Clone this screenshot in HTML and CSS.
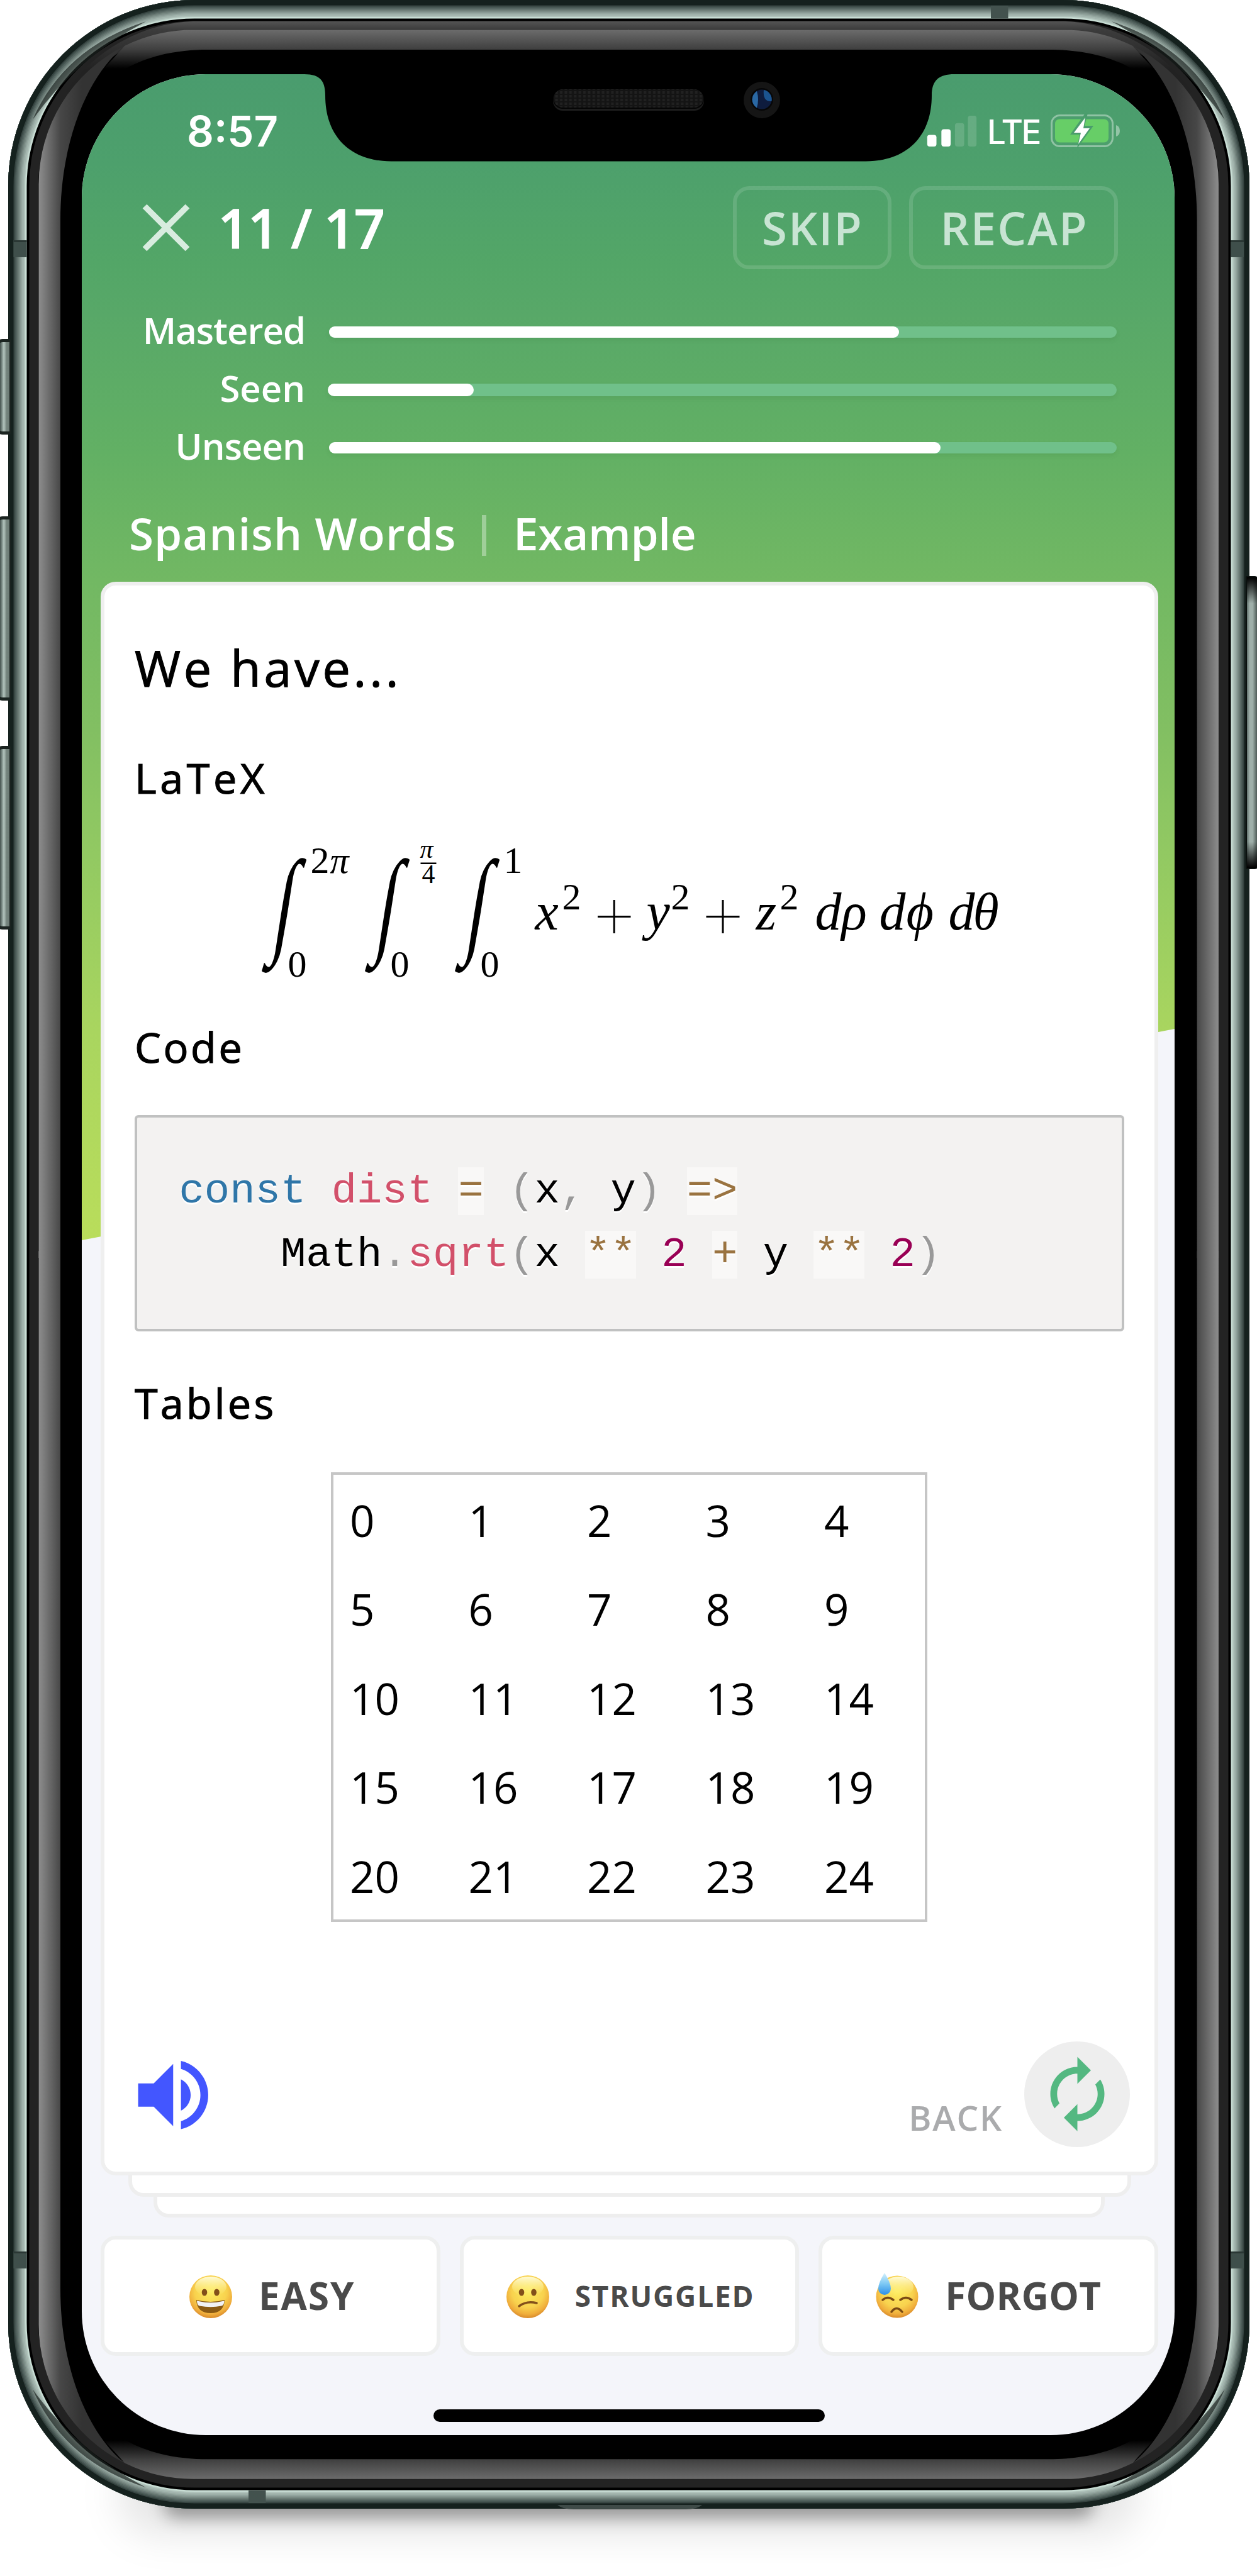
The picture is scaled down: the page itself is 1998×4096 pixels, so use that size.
FILE: index.html
```html
<!DOCTYPE html>
<html lang="en">
<head>
<meta charset="utf-8">
<title>Flashcards</title>
<link rel="stylesheet" href="styles.css">
</head>
<body>
<div class="stage">
  <div class="ground ground-wide"></div>
  <div class="ground ground-near"></div>
  <div class="body"></div>
  <div class="key key-mute"></div>
  <div class="key key-up"></div>
  <div class="key key-down"></div>
  <div class="key key-power"></div>
  <svg class="glass" viewBox="0 0 1998 4096">
    <defs>
      <linearGradient id="side" gradientUnits="userSpaceOnUse" x1="62" y1="0" x2="130" y2="0">
        <stop offset="0" stop-color="#8c8c8c"/><stop offset=".5" stop-color="#474747"/><stop offset="1" stop-color="#333"/>
      </linearGradient>
      <linearGradient id="cap" gradientUnits="userSpaceOnUse" x1="0" y1="47" x2="0" y2="109">
        <stop offset="0" stop-color="#6c6c6c"/><stop offset=".5" stop-color="#404040"/><stop offset="1" stop-color="#000"/>
      </linearGradient>
      <linearGradient id="lip" gradientUnits="userSpaceOnUse" x1="0" y1="33" x2="0" y2="110">
        <stop offset="0" stop-color="#565656"/><stop offset=".18" stop-color="#3c3c3c"/><stop offset="1" stop-color="#222"/>
      </linearGradient>
      <path id="crescent" fill="url(#side)" d="M61.500 2000V294A246 246 0 0 1 198 73C145 115 96 215 96 350V2000Z"/>
      <path id="ledge" fill="url(#cap)" d="M198 73A246 246 0 0 1 307 47.500H1000V79H330C290 79 240 86 200 109H165Q185 88 198 73Z"/>
      <path id="streak" fill="#1c2321" opacity=".7" d="M52 190Q102 76 232 34Q122 92 52 190Z"/>
      <g id="antenna"><rect x="21.500" y="0" width="21" height="27" fill="#3f4f4b"/><rect x="21.500" width="21" height="3" fill="#2a3734"/></g>
    </defs>
    <path fill="none" stroke="url(#lip)" stroke-width="13.500" d="M110 150A254 254 0 0 1 307 40.500H1692A254 254 0 0 1 1889 150"/>
    <g id="half"><use href="#crescent"/><use href="#ledge"/><use href="#streak"/></g>
    <use href="#half" transform="translate(1998.600 0) scale(-1 1)"/>
    <use href="#half" transform="translate(0 3989.300) scale(1 -1)"/>
    <use href="#half" transform="translate(1998.600 3989.300) scale(-1 -1)"/>
    <use href="#antenna" y="382"/><use href="#antenna" y="3580"/>
    <use href="#antenna" x="1934.500" y="382"/><use href="#antenna" x="1934.500" y="3580"/>
    <rect x="1575" y="9" width="27.500" height="20.500" fill="#43524e"/>
    <rect x="395" y="3960" width="27.500" height="20" fill="#43524e"/>
    <path d="M886 3983H1116Q1108 3990 1090 3990H912Q894 3990 886 3983Z" fill="#3f4b48"/>
  </svg>

  <main class="screen">
    <div class="hero"></div>

    <div class="status">
      <span class="clock">8:57</span>
      <div class="status-right">
        <svg class="signal" viewBox="0 0 80 50" fill="#fff">
          <rect x="0" y="31" width="15" height="19" rx="4"/><rect x="23" y="22" width="15" height="28" rx="4"/>
          <g opacity=".15"><rect x="45" y="12" width="15" height="38" rx="4"/><rect x="66" y="0" width="14" height="50" rx="4"/></g>
        </svg>
        <span class="lte">LTE</span>
        <svg class="battery" viewBox="0 0 110 52">
          <rect x="1.500" y="1.500" width="97" height="49" rx="13" fill="none" stroke="#fff" stroke-opacity=".38" stroke-width="3"/>
          <rect x="7" y="7.500" width="85" height="37" rx="7" fill="#67ce67"/>
          <path d="M104 17Q110 19 110 26T104 35Z" fill="#fff" fill-opacity=".4"/>
          <path d="M55 -2L31 32H46L42 54L68 18H54L59 -2Z" fill="#4a9d6c"/>
          <path d="M55 5L37 29H48L44 47L62 22H52Z" fill="#fff"/>
        </svg>
      </div>
    </div>

    <header class="topbar">
      <svg class="close" viewBox="0 0 76 76"><path d="M4 4L72 72M72 4L4 72" stroke="#d8ecdf" stroke-width="9.500"/></svg>
      <span class="count">11 / 17</span>
      <button class="ghost ghost-skip"><span>SKIP</span></button>
      <button class="ghost ghost-recap"><span>RECAP</span></button>
    </header>

    <section class="levels">
      <div class="level"><span class="level-name l1">Mastered</span><div class="track"><div class="fill" style="width:72.400%"></div></div></div>
      <div class="level"><span class="level-name l2">Seen</span><div class="track track-seen"><div class="fill" style="width:18.500%"></div></div></div>
      <div class="level"><span class="level-name l3">Unseen</span><div class="track"><div class="fill" style="width:77.700%"></div></div></div>
    </section>

    <div class="crumbs"><span class="crumb1">Spanish Words</span><i class="bar"></i><span class="crumb2">Example</span></div>

    <article class="card">
      <h1 class="lead">We have...</h1>
      <h2 class="sub s1">LaTeX</h2>
      <svg class="formula" viewBox="213.500 1281 1573 338">
        <g class="int">
          <text transform="translate(429 1497) skewX(-9) scale(.76 1.240)">∫</text>
          <text transform="translate(593 1497) skewX(-9) scale(.76 1.240)">∫</text>
          <text transform="translate(736 1497) skewX(-9) scale(.76 1.240)">∫</text>
        </g>
        <g class="small">
          <text x="493" y="1387.500">2</text><text class="it" x="524" y="1387.500">π</text>
          <text x="800" y="1387.500">1</text>
          <text x="457" y="1553">0</text><text x="620" y="1553">0</text><text x="763" y="1553">0</text>
          <text x="893" y="1446">2</text><text x="1066" y="1446">2</text><text x="1239" y="1446">2</text>
        </g>
        <g class="tiny"><text class="it" x="667" y="1364">π</text><text x="670" y="1404">4</text></g>
        <rect x="668" y="1371.500" width="25" height="2.500"/>
        <g class="it">
          <text x="850" y="1478">x</text><text x="1027" y="1478">y</text><text x="1201" y="1478">z</text>
          <text x="1295" y="1478">d</text><text x="1337" y="1478">ρ</text>
          <text x="1397" y="1478">d</text><text x="1440" y="1478">ϕ</text>
          <text x="1507" y="1478">d</text><text x="1546" y="1478">θ</text>
        </g>
        <path d="M949.500 1457.500H1002M975.700 1431V1484M1122 1457.500H1175M1148.500 1431V1484" stroke="#000" stroke-width="3"/>
      </svg>
      <h2 class="sub s2">Code</h2>
      <pre class="code"><span class="kw">const</span> <span class="fn">dist</span> <span class="op">=</span> <span class="pn">(</span>x<span class="pn">,</span> y<span class="pn">)</span> <span class="op">=&gt;</span>
    Math<span class="pn">.</span><span class="fn">sqrt</span><span class="pn">(</span>x <span class="op">**</span> <span class="nu">2</span> <span class="op">+</span> y <span class="op">**</span> <span class="nu">2</span><span class="pn">)</span></pre>
      <h2 class="sub s3">Tables</h2>
      <div class="grid">
        <span>0</span><span>1</span><span>2</span><span>3</span><span>4</span>
        <span>5</span><span>6</span><span>7</span><span>8</span><span>9</span>
        <span>10</span><span>11</span><span>12</span><span>13</span><span>14</span>
        <span>15</span><span>16</span><span>17</span><span>18</span><span>19</span>
        <span>20</span><span>21</span><span>22</span><span>23</span><span>24</span>
      </div>
      <footer class="card-foot">
        <svg class="sound" viewBox="0 0 24 24" fill="#4356ff"><path d="M3 9v6h4l5 5V4L7 9H3zm13.500 3c0-1.770-1.020-3.290-2.500-4.030v8.050c1.480-.73 2.500-2.250 2.500-4.020zM14 3.230v2.060c2.890.86 5 3.540 5 6.710s-2.110 5.850-5 6.710v2.060c4.010-.91 7-4.490 7-8.770s-2.990-7.860-7-8.770z"/></svg>
        <span class="back">BACK</span>
        <div class="flip"><svg viewBox="0 0 24 24" fill="#54b881"><path d="M12 6v3l4-4-4-4v3c-4.420 0-8 3.580-8 8 0 1.570.46 3.030 1.240 4.260L6.700 14.800c-.45-.83-.7-1.790-.7-2.800 0-3.310 2.690-6 6-6zm6.760 1.740L17.300 9.200c.44.84.7 1.790.7 2.800 0 3.310-2.690 6-6 6v-3l-4 4 4 4v-3c4.420 0 8-3.580 8-8 0-1.570-.46-3.030-1.240-4.260z"/></svg></div>
      </footer>
    </article>
    <div class="under under-1"></div>
    <div class="under under-2"></div>

    <nav class="answers">
      <button class="answer a1">
        <svg class="face" viewBox="0 0 68 68">
          <defs>
            <radialGradient id="skin" cx=".5" cy=".38" r=".62"><stop offset="0" stop-color="#fdec5e"/><stop offset=".6" stop-color="#f8d24e"/><stop offset=".85" stop-color="#f0ae3c"/><stop offset="1" stop-color="#d98a2c"/></radialGradient>
            <linearGradient id="shine" x1="0" y1="0" x2="0" y2="1"><stop offset="0" stop-color="#fffde0" stop-opacity=".95"/><stop offset="1" stop-color="#fff27a" stop-opacity="0"/></linearGradient>
            <linearGradient id="drop" x1="0" y1="0" x2="0" y2="1"><stop offset="0" stop-color="#d5f0fb"/><stop offset=".5" stop-color="#7cc8f4"/><stop offset="1" stop-color="#2d8fe8"/></linearGradient>
          </defs>
          <circle cx="34" cy="34" r="34" fill="url(#skin)"/><ellipse cx="34" cy="18" rx="25" ry="16" fill="url(#shine)"/>
          <ellipse cx="24" cy="27" rx="4.300" ry="5.500" fill="#83501a"/><ellipse cx="43.500" cy="27" rx="4.300" ry="5.500" fill="#83501a"/>
          <path d="M11 39Q34 45 56 39Q55 60 34 60Q12 60 11 39Z" fill="#8a5a14"/><path d="M12 40.500Q34 46 55.500 40.500Q55 48 51 48.500Q34 52 16 48.500Q12 47 12 40.500Z" fill="#f1f1f4"/>
        </svg><span>EASY</span>
      </button>
      <button class="answer a2">
        <svg class="face" viewBox="0 0 68 68">
          <circle cx="34" cy="34" r="34" fill="url(#skin)"/><ellipse cx="34" cy="18" rx="25" ry="16" fill="url(#shine)"/>
          <ellipse cx="24" cy="27" rx="4.300" ry="5.500" fill="#83501a"/><ellipse cx="43.500" cy="27" rx="4.300" ry="5.500" fill="#83501a"/>
          <path d="M20 49Q32 40 48 44" fill="none" stroke="#83501a" stroke-width="3.500" stroke-linecap="round"/>
        </svg><span>STRUGGLED</span>
      </button>
      <button class="answer a3">
        <svg class="face" viewBox="0 0 68 72">
          <circle cx="34" cy="38" r="33.500" fill="url(#skin)"/><ellipse cx="36" cy="22" rx="24" ry="16" fill="url(#shine)"/>
          <path d="M11 43Q19 36 28 43M39 43Q48 36 57 43" fill="none" stroke="#7a4a14" stroke-width="3.500" stroke-linecap="round"/>
          <path d="M25 62Q33 51 42 62" fill="none" stroke="#7a4a14" stroke-width="3.500" stroke-linecap="round"/>
          <path d="M14 0Q4 16 4 25A10 10 0 0 0 24 25Q24 16 14 0Z" fill="url(#drop)"/>
        </svg><span>FORGOT</span>
      </button>
    </nav>
    <div class="home"></div>
  </main>

  <svg class="notch" viewBox="484 112 1034 146">
    <defs>
      <pattern id="mesh" width="7.400" height="6" patternUnits="userSpaceOnUse"><rect width="7.400" height="6" fill="#141414"/><rect x="2" y="1" width="4" height="4" fill="#212121"/></pattern>
    </defs>
    <path d="M484 112V118C508 118 517 128 517 152C517 216 556 256.500 622 256.500H1376C1442 256.500 1481 216 1481 152C1481 128 1492 118 1517 118V112Z"/>
    <rect x="879" y="145" width="240" height="31" rx="15.500" fill="#1d1d1d"/>
    <rect x="879" y="142" width="240" height="31" rx="15.500" fill="#050505"/>
    <rect x="880" y="142" width="238" height="29" rx="14.500" fill="url(#mesh)"/>
    <circle cx="1211" cy="159" r="29" fill="#151515"/><circle cx="1211" cy="158" r="18" fill="#070707"/>
    <circle cx="1211" cy="158" r="15.500" fill="#0e1c3e"/>
    <path d="M1203 145A15.500 15.500 0 0 0 1203 171.500Q1207 158 1203 145Z" fill="#2a68a4"/>
    <path d="M1214 143A15.500 15.500 0 0 1 1226.500 161Q1212 162 1214 143Z" fill="#1b5490"/>
  </svg>
</div>
</body>
</html>
```

FILE: styles.css
```css
* { box-sizing: border-box; }
html, body { margin: 0; background: #fff; }
body { font-family: "Open Sans", "Noto Sans", sans-serif; color: #000; }
button { font: inherit; margin: 0; padding: 0; background: none; border: 0; }
h1, h2, pre { margin: 0; font-weight: 400; }

.stage { position: relative; width: 1998px; height: 4096px; padding: 118px 131px 0 130px; overflow: hidden; }

/* device shell */
.ground { position: absolute; border-radius: 60px; }
.ground-wide { left: 190px; right: 190px; top: 3900px; height: 130px; background: rgba(0,0,0,.1); filter: blur(30px); }
.ground-near { left: 260px; right: 260px; top: 3960px; height: 44px; background: rgba(0,0,0,.34); filter: blur(13px); }
.key { position: absolute; left: -8px; width: 25px; border: 5px solid #1b2421; border-right-width: 2px; border-radius: 12px 2px 2px 12px;
  background: linear-gradient(90deg, #4c5a56 0 20%, #b3c5be 50%, #74837d 75%, #6c7b75); }
.key-mute { top: 539px; height: 152px; }
.key-up { top: 821px; height: 293px; }
.key-down { top: 1186px; height: 292px; }
.key-power { left: 1980px; width: 22px; top: 916px; height: 466px; border: 2px solid #0a100e; border-radius: 2px 8px 8px 2px;
  background: linear-gradient(180deg, #000, transparent 9% 91%, #000), linear-gradient(90deg, #60706b, #9fb0aa 25%, #9fb0aa 50%, #4c5955 90%); }
.body { position: absolute; left: 13px; top: 0; width: 1972.6px; height: 3989.3px; border-radius: 296px; background: #000;
  box-shadow: inset 0 0 0 8.500px #15211e, inset 0 0 0 10.500px #364441, inset 0 0 0 12.500px #475753, inset 0 0 0 14.500px #566662,
    inset 0 0 0 16.500px #667671, inset 0 0 0 18.500px #768781, inset 0 0 0 20.500px #869791, inset 0 0 0 22.500px #95a7a0,
    inset 0 0 0 25px #a3b5ae, inset 0 0 0 27px #b0c3bb, inset 0 0 0 29.500px #c8ddd4, inset 0 0 0 33.500px #000, inset 0 0 0 48px #232323; }
.glass { position: absolute; left: 0; top: 0; width: 1998px; height: 4096px; }
.notch { position: absolute; left: 484px; top: 112px; width: 1034px; height: 146px; }

/* screen */
.screen { position: relative; width: 1737px; height: 3753.5px; border-radius: 197px; overflow: hidden; background: #f4f5fa;
  display: flex; flex-direction: column; }
.hero { position: absolute; left: 0; top: 0; width: 100%; height: 1854px; clip-path: polygon(0 0, 100% 0, 100% 1518px, 0 100%);
  background: linear-gradient(180deg, #4a9c6e 0, #4da06c 142px, #53a667 302px, #58a868 382px, #62b064 600px, #72b863 807px,
    #82bf62 1042px, #92c962 1242px, #9fd060 1402px, #a9d55f 1522px, #b9dd5b 1854px); }
.screen > :not(.hero) { position: relative; flex: none; }

.status { height: 178px; padding: 0 87px 0 167px; display: flex; justify-content: space-between; align-items: center; color: #fff;
  font-family: Inter, "Liberation Sans", sans-serif; }
.clock { font-size: 67px; font-weight: 600; line-height: 80px; padding-top: 3px; }
.status-right { display: flex; align-items: center; padding-top: 2px; }
.signal { width: 80px; height: 49px; }
.lte { font-size: 53px; font-weight: 500; line-height: 60px; margin: 4px 0 0 16px; width: 101px; letter-spacing: -2.500px; }
.battery { width: 110px; height: 52px; overflow: visible; }

.topbar { height: 131.5px; padding: 0 90px 0 95.5px; display: flex; align-items: center; color: #fff; }
.close { width: 76px; height: 76px; }
.count { font-size: 86px; font-weight: 600; line-height: 110px; margin-left: 45px; letter-spacing: -1.6px; white-space: nowrap; -webkit-text-stroke: 1.2px #fff; }
.ghost { height: 131.5px; border: 6px solid rgba(255,255,255,.13); border-radius: 26px; color: #c8e4d3; font-size: 72.5px; font-weight: 600; line-height: 110px; letter-spacing: 2px; padding-left: 2px; display: flex; justify-content: center; align-items: center; }
.ghost-skip { width: 252px; margin-left: auto; }
.ghost-recap { width: 332px; margin-left: 28.5px; }

.levels { padding: 54.5px 92.5px 0 0; }
.level { height: 92px; display: flex; align-items: center; }
.level-name { width: 355px; text-align: right; color: #fff; font-size: 58px; font-weight: 600; line-height: 80px; padding-bottom: 6px; }
.l1 { letter-spacing: -1px; }
.l3 { letter-spacing: -.9px; }
.track { flex: 1; margin-left: 37.5px; height: 18px; border-radius: 9px; background: #70c08a; box-shadow: 0 4px 6px rgba(60,120,60,.15); }
.track-seen { height: 20px; border-radius: 10px; margin-left: 36px; }
.fill { height: 100%; border-radius: 10px; background: #fff; }

.crumbs { height: 166.5px; padding: 13px 0 0 75px; display: flex; align-items: center; color: #fff; font-size: 71px; font-weight: 600; white-space: nowrap; }
.crumb1 { width: 561px; letter-spacing: 1px; }
.crumb2 { letter-spacing: -.3px; }
.bar { width: 7px; height: 65px; margin-top: 8px; background: rgba(255,255,255,.35); margin-right: 43px; }

.card { height: 2534px; margin: 0 26px 0 30px; padding: 81.5px 48px 39px; border: 6px solid #efefef; border-radius: 24px; background: #fff; display: flex; flex-direction: column; z-index: 3; }
.lead { font-size: 79px; line-height: 100px; letter-spacing: 4.8px; -webkit-text-stroke: 1.2px #000; }
.sub { font-size: 66.5px; line-height: 90px; letter-spacing: 4.2px; -webkit-text-stroke: 1.2px #000; }
.s1 { margin-top: 79px; letter-spacing: 5.6px; }
.s2 { letter-spacing: 3.6px; }
.formula { width: 1573px; height: 338px; font-family: "Liberation Serif", serif; font-size: 84px; overflow: visible; }
.formula .it { font-style: italic; }
.formula .small { font-size: 60px; }
.formula .tiny { font-size: 42px; }
.formula .int { font-size: 150px; }
.code { width: 1573px; height: 344.5px; margin-top: 63.5px; padding: 67px 0 0 66.5px; border: 4px solid #c0c1c1; border-radius: 6px; background: #f3f2f1;
  font: 67.25px/101px "Liberation Mono", "Courier New", monospace; text-shadow: 0 3px #fff; }
.kw { color: #2f76a8; } .fn { color: #d2506a; } .pn { color: #999; } .nu { color: #905; }
.op { color: #9a7340; background: #f9f8f7; }
.s3 { margin-top: 68px; }
.grid { width: 948px; height: 715px; margin: 66px 0 0 312px; border: 4px solid #c6c6c6; padding: 1px 0 0 26px; display: grid;
  grid-template-columns: repeat(5, 188.5px); grid-template-rows: repeat(5, 141.5px); align-items: center; font-size: 69px; line-height: 80px; }
.card-foot { margin-top: auto; height: 168px; display: flex; align-items: center; }
.sound { width: 148.5px; height: 148.5px; margin-left: -13px; margin-top: 3px; }
.back { margin-left: auto; font-size: 55px; font-weight: 600; letter-spacing: 1.8px; color: #aaabad; padding-top: 74px; }
.flip { width: 168px; height: 168px; margin: 0 -9px 0 34px; border-radius: 50%; background: #eee; display: flex; justify-content: center; align-items: center; }
.flip svg { width: 129px; height: 129px; }

.under { background: #fff; border: 6px solid #eee; border-top: 0; border-radius: 0 0 24px 24px; }
.under-1 { width: 1594px; height: 34px; margin-left: 73.5px; z-index: 2; }
.under-2 { width: 1512px; height: 33.5px; margin-left: 113.5px; }

.answers { margin: 28.5px 26px 0 30px; height: 191px; display: grid; grid-template-columns: repeat(3, 1fr); gap: 31px; }
.answer { border: 6px solid #eeefef; border-radius: 24px; background: #fff; color: #4a4a4a; font-weight: 700; font-size: 60px; line-height: 80px; letter-spacing: 2px; display: flex; align-items: center; }
.answer span { white-space: nowrap; }
.face { width: 68px; height: 68px; flex: none; }
.a1 .face { margin: 3px 42px 0 135px; }
.a2 .face { margin: 3px 41px 0 68px; }
.a3 .face { margin: 0 42px 0 85px; height: 72px; }
.a2 { font-size: 46px; letter-spacing: 1.8px; }
.a3 { letter-spacing: .3px; }
.home { width: 622px; height: 20px; margin: 85px 0 0 559px; border-radius: 10px; background: #000; }
```
